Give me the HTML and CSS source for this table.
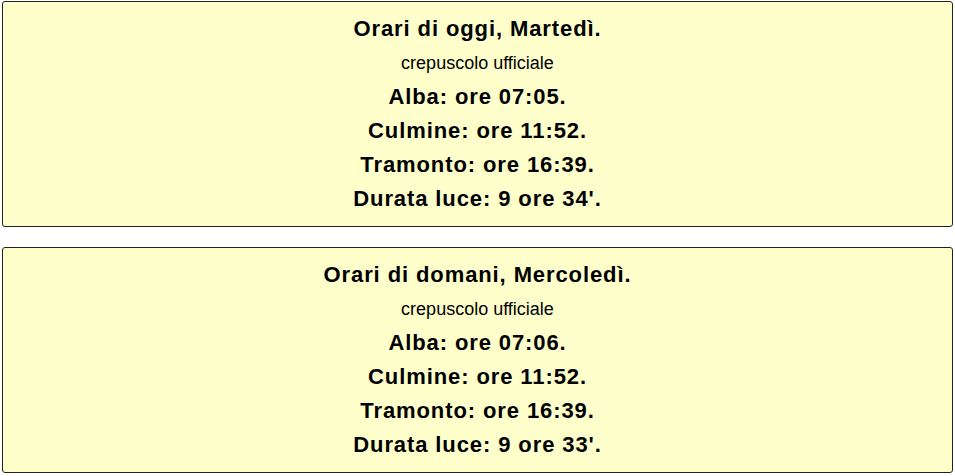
FILE: index.html
```html
<!DOCTYPE html>
<html lang="it">
<head>
<meta charset="utf-8">
<title>Orari</title>
<link rel="stylesheet" href="styles.css">
</head>
<body>
<div class="page">
  <div class="box">
    <div class="title">Orari di oggi, Martedì.</div>
    <div class="sub">crepuscolo ufficiale</div>
    <div class="row">Alba: ore 07:05.</div>
    <div class="row">Culmine: ore 11:52.</div>
    <div class="row">Tramonto: ore 16:39.</div>
    <div class="row">Durata luce: 9 ore 34'.</div>
  </div>
  <div class="box">
    <div class="title">Orari di domani, Mercoledì.</div>
    <div class="sub">crepuscolo ufficiale</div>
    <div class="row">Alba: ore 07:06.</div>
    <div class="row">Culmine: ore 11:52.</div>
    <div class="row">Tramonto: ore 16:39.</div>
    <div class="row">Durata luce: 9 ore 33'.</div>
  </div>
</div>
</body>
</html>
```
FILE: styles.css
```css
html, body {
  margin: 0;
  padding: 0;
  background: #ffffff;
}
.page {
  padding: 1px 2px;
  display: flex;
  flex-direction: column;
  gap: 20px;
  font-family: "Liberation Sans", Arial, sans-serif;
  color: #000;
}
.box {
  background: #ffffcc;
  border: 1px solid #222;
  border-radius: 3px;
  padding: 10px 0 10px;
  text-align: center;
}
.title, .row {
  font-size: 22px;
  font-weight: bold;
  letter-spacing: 0.9px;
  line-height: 34px;
}
.sub {
  font-size: 18px;
  line-height: 34px;
}
```
